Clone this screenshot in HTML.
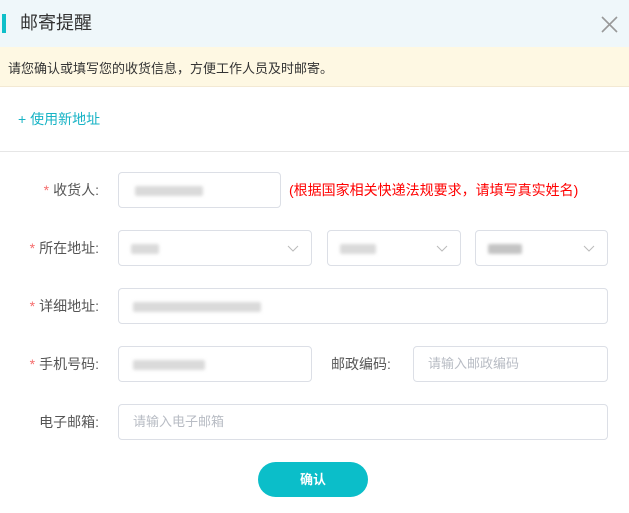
<!DOCTYPE html>
<html><head><meta charset="utf-8"><style>
*{box-sizing:border-box;margin:0;padding:0}
body{width:629px;height:513px;background:#fff;font-family:"Liberation Sans","Noto Sans CJK SC",sans-serif;position:relative;overflow:hidden;color:#555}
.a{position:absolute}
.hd{left:0;top:0;width:629px;height:47px;background:#eff7fa}
.bar{left:2px;top:14px;width:4px;height:19px;background:#0fbfc9}
.title{left:20px;top:11px;font-size:18px;color:#333;line-height:24px}
.banner{left:0;top:47px;width:629px;height:40px;background:#fef8e3;border-bottom:1px solid #f3e9d3}
.btext{left:8px;top:60px;font-size:13px;color:#333;line-height:18px}
.new{left:18px;top:109px;font-size:14px;color:#17b3c5;line-height:20px}
.div{left:0;top:151px;width:629px;height:1px;background:#e6e6e6}
.box{border:1px solid #dcdfe6;border-radius:4px;background:#fff;height:36px}
.lbl{font-size:14px;color:#555;line-height:20px;text-align:right;width:99px;left:0}
.lbl i{color:#f56c6c;font-style:normal;margin-right:4px}
.blur{position:absolute;top:13px;height:10px;background:#dadada;border-radius:2px;filter:blur(1.5px)}
.ph{position:absolute;left:14px;top:8px;font-size:13px;color:#b8bcc4;line-height:18px}
.chev{position:absolute;right:12px;top:11px}
.red{left:289px;top:180px;font-size:14px;color:#f00;line-height:20px}
.btn{left:258px;top:462px;width:110px;height:35px;border-radius:18px;background:#0bbec9;color:#fff;font-size:13px;font-weight:bold;text-align:center;line-height:35px}
</style></head><body>
<div class="a hd"></div><div class="a bar"></div>
<div class="a title">邮寄提醒</div>
<svg class="a" style="left:601px;top:16px" width="17" height="17" viewBox="0 0 17 17"><path d="M1 1L16 16M16 1L1 16" stroke="#999" stroke-width="1.6"/></svg>
<div class="a banner"></div>
<div class="a btext">请您确认或填写您的收货信息，方便工作人员及时邮寄。</div>
<div class="a new">+ 使用新地址</div>
<div class="a div"></div>

<div class="a lbl" style="top:180px"><i>*</i>收货人:</div>
<div class="a box" style="left:118px;top:172px;width:163px"><div class="blur" style="left:16px;width:68px"></div></div>
<div class="a red">(根据国家相关快递法规要求，请填写真实姓名)</div>

<div class="a lbl" style="top:238px"><i>*</i>所在地址:</div>
<div class="a box" style="left:118px;top:230px;width:194px"><div class="blur" style="left:12px;width:28px"></div><svg class="chev" width="12" height="12"><path d="M1 4L6 9L11 4" stroke="#bbb" fill="none"/></svg></div>
<div class="a box" style="left:327px;top:230px;width:134px"><div class="blur" style="left:12px;width:36px"></div><svg class="chev" width="12" height="12"><path d="M1 4L6 9L11 4" stroke="#bbb" fill="none"/></svg></div>
<div class="a box" style="left:475px;top:230px;width:133px"><div class="blur" style="left:12px;width:34px;background:#c4c4c4"></div><svg class="chev" width="12" height="12"><path d="M1 4L6 9L11 4" stroke="#bbb" fill="none"/></svg></div>

<div class="a lbl" style="top:296px"><i>*</i>详细地址:</div>
<div class="a box" style="left:118px;top:288px;width:490px"><div class="blur" style="left:14px;width:128px"></div></div>

<div class="a lbl" style="top:354px"><i>*</i>手机号码:</div>
<div class="a box" style="left:118px;top:346px;width:194px"><div class="blur" style="left:14px;width:72px"></div></div>
<div class="a" style="left:331px;top:354px;font-size:14px;line-height:20px;color:#555">邮政编码:</div>
<div class="a box" style="left:413px;top:346px;width:195px"><div class="ph">请输入邮政编码</div></div>

<div class="a lbl" style="top:412px">电子邮箱:</div>
<div class="a box" style="left:118px;top:404px;width:490px"><div class="ph">请输入电子邮箱</div></div>

<div class="a btn">确认</div>
</body></html>
